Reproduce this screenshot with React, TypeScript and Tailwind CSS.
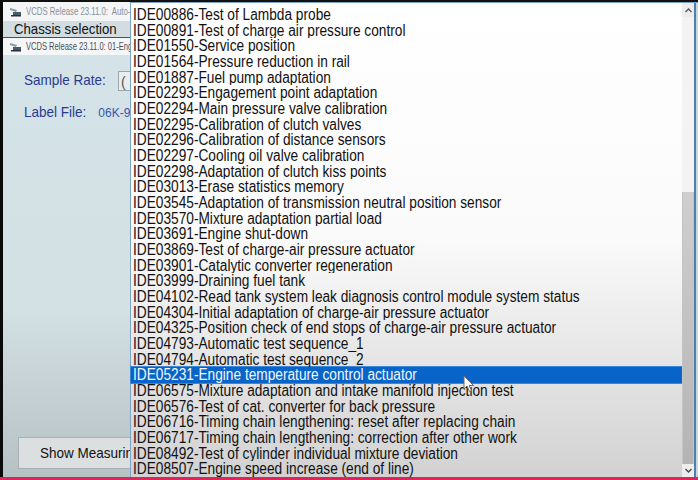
const items = [
  'IDE00886-Test of Lambda probe',
  'IDE00891-Test of charge air pressure control',
  'IDE01550-Service position',
  'IDE01564-Pressure reduction in rail',
  'IDE01887-Fuel pump adaptation',
  'IDE02293-Engagement point adaptation',
  'IDE02294-Main pressure valve calibration',
  'IDE02295-Calibration of clutch valves',
  'IDE02296-Calibration of distance sensors',
  'IDE02297-Cooling oil valve calibration',
  'IDE02298-Adaptation of clutch kiss points',
  'IDE03013-Erase statistics memory',
  'IDE03545-Adaptation of transmission neutral position sensor',
  'IDE03570-Mixture adaptation partial load',
  'IDE03691-Engine shut-down',
  'IDE03869-Test of charge-air pressure actuator',
  'IDE03901-Catalytic converter regeneration',
  'IDE03999-Draining fuel tank',
  'IDE04102-Read tank system leak diagnosis control module system status',
  'IDE04304-Initial adaptation of charge-air pressure actuator',
  'IDE04325-Position check of end stops of charge-air pressure actuator',
  'IDE04793-Automatic test sequence_1',
  'IDE04794-Automatic test sequence_2',
  'IDE05231-Engine temperature control actuator',
  'IDE06575-Mixture adaptation and intake manifold injection test',
  'IDE06576-Test of cat. converter for back pressure',
  'IDE06716-Timing chain lengthening: reset after replacing chain',
  'IDE06717-Timing chain lengthening: correction after other work',
  'IDE08492-Test of cylinder individual mixture deviation',
  'IDE08507-Engine speed increase (end of line)',
];

const SELECTED = 'IDE05231-Engine temperature control actuator';

function AppIcon() {
  return (
    <svg width="13" height="11" viewBox="0 0 13 11" className="shrink-0">
      <path d="M1 2 L8 4 L7 6 L1 4 Z" fill="#8a9aa6" />
      <rect x="4" y="6" width="8" height="3" fill="#4a5a66" />
      <rect x="2" y="9" width="10" height="1.5" fill="#2a3038" />
    </svg>
  );
}

function Cursor() {
  return (
    <svg width="12" height="18" viewBox="0 0 12 18" className="absolute left-[463px] top-[375px]">
      <path d="M1 1 L1 14 L4 11 L6.5 16.5 L8.5 15.5 L6 10.5 L10.5 10.5 Z" fill="#ffffff" stroke="#6b6b6b" strokeWidth="1" />
    </svg>
  );
}

export default function App() {
  return (
    <div className="relative w-[698px] h-[480px] overflow-hidden bg-black flex flex-col font-['Liberation_Sans',Arial,sans-serif]">
      <div className="h-[2px] shrink-0 bg-[#111]" />
      <div className="flex flex-1 min-h-0">
        <div className="w-[3px] shrink-0 bg-[#0a0a0a]" />

        {/* background VCDS windows, cut off by the open list */}
        <div className="w-[127px] shrink-0 flex flex-col overflow-hidden">
          <div className="h-[19px] shrink-0 bg-[#f3f5f6] flex items-center gap-[4px] pl-[6px] overflow-hidden">
            <AppIcon />
            <span className="inline-block origin-left scale-x-[0.74] text-[10.5px] text-[#8a8f94] whitespace-nowrap">VCDS Release 23.11.0:&nbsp; Auto-</span>
          </div>
          <div className="h-[17px] shrink-0 bg-[#d3dde1] border-b border-[#4a5258] flex items-end pl-[11px] overflow-hidden">
            <span className="inline-block origin-left scale-x-[0.88] text-[15px] leading-[16px] text-[#111] whitespace-nowrap">Chassis selection</span>
          </div>
          <div className="h-[17px] shrink-0 bg-[#f4f6f7] flex items-center gap-[4px] pl-[6px] overflow-hidden">
            <AppIcon />
            <span className="inline-block origin-left scale-x-[0.72] text-[10.5px] text-[#4a4f55] whitespace-nowrap">VCDS Release 23.11.0: 01-Eng</span>
          </div>
          <div className="flex-1 bg-gradient-to-b from-[#d4e3e8] via-[#d3e0e4] via-60% to-[#b6c1c4] flex flex-col pl-[21px] pt-[15px] pb-[8px]">
            <div className="flex items-center h-[21px]">
              <span className="inline-block origin-left scale-x-[0.9] text-[15px] text-[#273a8f] w-[94px] whitespace-nowrap">Sample Rate:</span>
              <div className="h-[20px] w-[12px] bg-[#e8eef0] border border-[#9aa6ab] border-r-0 text-[14px] text-[#555] pl-[2px]">(</div>
            </div>
            <div className="flex items-center h-[21px] mt-[11px]">
              <span className="inline-block origin-left scale-x-[0.9] text-[15px] text-[#273a8f] w-[75px] whitespace-nowrap">Label File:</span>
              <span className="text-[12px] text-[#3a56a6] whitespace-nowrap overflow-hidden">06K-9</span>
            </div>
            <div className="flex-1" />
            <div className="h-[32px] w-[130px] -ml-[6px] bg-[#dcdfe0] border border-[#a9b0b3] border-r-0 flex items-center pl-[21px] overflow-hidden">
              <span className="inline-block origin-left scale-x-[0.9] text-[15px] text-[#111] whitespace-nowrap">Show Measurin</span>
            </div>
          </div>
        </div>

        {/* dropdown list */}
        <div className="flex-1 min-w-0 flex border-t border-l border-[#7fa3c8] bg-gradient-to-b from-[#ffffff] via-[#fafafa] via-50% to-[#d2d2d2]">
          <div className="flex-1 min-w-0 flex flex-col pt-[4px]">
            {items.map(it => (
              <div
                key={it}
                className={
                  it === SELECTED
                    ? 'h-[15.85px] leading-[15.85px] pl-[2px] whitespace-nowrap overflow-hidden bg-[#0864c8] text-[#f2f6fb] outline outline-1 outline-[#3b86d6]'
                    : 'h-[15.85px] leading-[15.85px] pl-[2px] whitespace-nowrap overflow-hidden text-[#111]'
                }
              >
                <span className="inline-block origin-left scale-x-[0.878] text-[15.6px]">{it}</span>
              </div>
            ))}
          </div>
          <div className="w-[12px] shrink-0 flex flex-col bg-[#ededed]">
            <div className="h-[14px] flex items-center justify-center">
              <svg width="7" height="5" viewBox="0 0 7 5"><path d="M0.5 4 L3.5 1 L6.5 4" fill="none" stroke="#555" strokeWidth="1.3" /></svg>
            </div>
            <div className="h-[175px] bg-[#f3f3f3]" />
            <div className="flex-1 bg-gradient-to-b from-[#cfcfcf] to-[#b4b4b4] border-x border-[#c4c4c4]" />
            <div className="h-[13px] flex items-center justify-center">
              <svg width="7" height="5" viewBox="0 0 7 5"><path d="M0.5 1 L3.5 4 L6.5 1" fill="none" stroke="#444" strokeWidth="1.3" /></svg>
            </div>
          </div>
          <div className="w-[2px] shrink-0 bg-[#4f7fae]" />
          <div className="w-[2px] shrink-0 bg-[#c9d6dd]" />
        </div>
      </div>
      <div className="h-[3px] shrink-0 bg-[#e0245a]" />
      <Cursor />
    </div>
  );
}
